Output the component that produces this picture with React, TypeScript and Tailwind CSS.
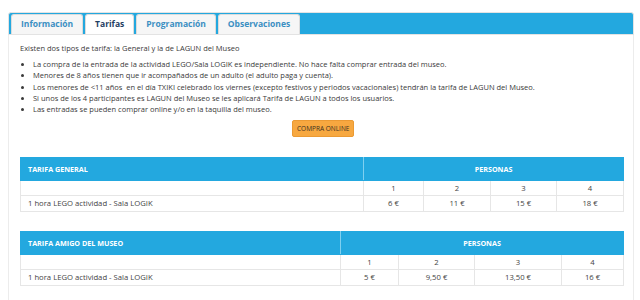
const tabs = ["Información", "Tarifas", "Programación", "Observaciones"];

const bullets = [
  "La compra de la entrada de la actividad LEGO/Sala LOGIK es independiente. No hace falta comprar entrada del museo.",
  "Menores de 8 años tienen que ir acompañados de un adulto (el adulto paga y cuenta).",
  "Los menores de <11 años  en el día TXIKI celebrado los viernes (excepto festivos y periodos vacacionales) tendrán la tarifa de LAGUN del Museo.",
  "Si unos de los 4 participantes es LAGUN del Museo se les aplicará Tarifa de LAGUN a todos los usuarios.",
  "Las entradas se pueden comprar online y/o en la taquilla del museo.",
];

type Tarifa = {
  title: string;
  widths: string[];
  prices: string[];
};

const tarifas: Tarifa[] = [
  {
    title: "TARIFA GENERAL",
    widths: ["w-[343px]", "w-[60px]", "w-[67px]", "w-[66px]", "w-[67px]"],
    prices: ["6 €", "11 €", "15 €", "18 €"],
  },
  {
    title: "TARIFA AMIGO DEL MUSEO",
    widths: ["w-[320px]", "w-[58px]", "w-[76px]", "w-[87px]", "w-[62px]"],
    prices: ["5 €", "9,50 €", "13,50 €", "16 €"],
  },
];

function PriceTable({ t }: { t: Tarifa }) {
  return (
    <table className="w-[603px] table-fixed border-collapse text-[7.7px] text-[#444]">
      <colgroup>
        {t.widths.map((w, i) => (
          <col key={i} className={w} />
        ))}
      </colgroup>
      <thead>
        <tr className="h-[23px] bg-[#23a8df] text-white">
          <th className="border border-[#23a8df] border-r-[#7fd0f0] pl-[7px] text-left text-[7.2px] font-bold">
            {t.title}
          </th>
          <th colSpan={4} className="border border-[#23a8df] text-center text-[7.2px] font-bold">
            PERSONAS
          </th>
        </tr>
      </thead>
      <tbody>
        <tr className="h-[15px]">
          <td className="border border-[#e6e6e6]"></td>
          {[1, 2, 3, 4].map((n) => (
            <td key={n} className="border border-[#e6e6e6] text-center">
              {n}
            </td>
          ))}
        </tr>
        <tr className="h-[16px]">
          <td className="border border-[#e6e6e6] pl-[7px]">1 hora LEGO actividad - Sala LOGIK</td>
          {t.prices.map((p) => (
            <td key={p} className="border border-[#e6e6e6] text-center">
              {p}
            </td>
          ))}
        </tr>
      </tbody>
    </table>
  );
}

export default function App() {
  return (
    <div className="h-[300px] w-[640px] overflow-hidden bg-white pt-3 font-['Open_Sans',sans-serif]">
      <div className="ml-[8px] w-[626px]">
        {/* Tab bar */}
        <div className="flex h-[23px] items-end gap-[2px] rounded-t-[3px] border border-[#e3e3e3] bg-[#23a8df] pl-[2px]">
          {tabs.map((tab) => (
            <div
              key={tab}
              className={`flex h-[20px] items-center rounded-t-[3px] border border-b-0 border-[#dcdcdc] px-[9px] text-[8.5px] font-bold ${
                tab === "Tarifas" ? "bg-white text-[#1f3f63]" : "bg-[#f6f6f6] text-[#3b8fc2]"
              }`}
            >
              {tab}
            </div>
          ))}
        </div>

        {/* Panel */}
        <div className="h-[270px] border-x border-[#ececec] pl-[11px] pt-[8px] text-[7.5px] text-[#3a3a3a]">
          <p className="leading-[11px]">Existen dos tipos de tarifa: la General y la de LAGUN del Museo</p>
          <ul className="mt-[5px] list-disc pl-[13px] leading-[11.3px]">
            {bullets.map((b) => (
              <li key={b} className="whitespace-pre">
                {b}
              </li>
            ))}
          </ul>
          <div className="mt-[5px] flex pl-[272px]">
            <button className="h-[17px] rounded-[2px] border border-[#eb9a33] bg-[#f7a840] px-[4px] text-[6.5px] text-[#3a3020]">
              COMPRA ONLINE
            </button>
          </div>
          <div className="mt-[20px]">
            <PriceTable t={tarifas[0]} />
          </div>
          <div className="mt-[19px]">
            <PriceTable t={tarifas[1]} />
          </div>
        </div>
      </div>
    </div>
  );
}
